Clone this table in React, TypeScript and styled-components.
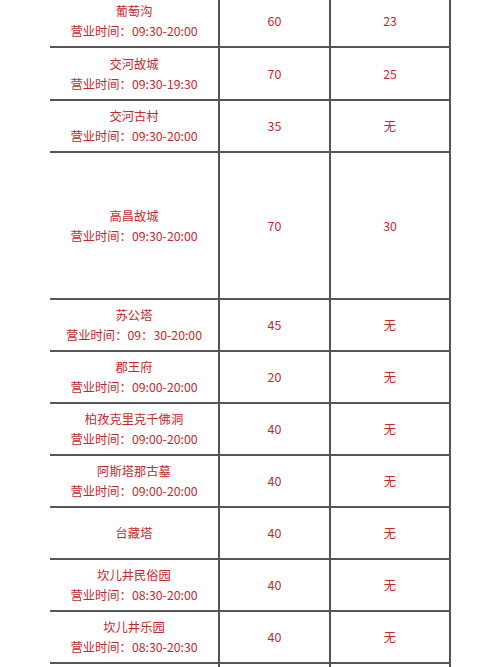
import React from "react";
import styled, { createGlobalStyle } from "styled-components";

const Global = createGlobalStyle`
  html, body { margin: 0; padding: 0; background: #ffffff; }
  body { font-family: "Microsoft YaHei", "Noto Sans CJK SC", "Noto Sans", sans-serif; overflow: hidden; }
`;

const Page = styled.div`
  width: 500px;
  height: 667px;
  overflow: hidden;
  background: #fff;
`;

const Table = styled.div`
  margin: -4px 0 0 50px;
  width: 401px;
  display: flex;
  flex-direction: column;
`;

const Row = styled.div<{ $h: number }>`
  display: grid;
  grid-template-columns: 170px 111px 120px;
  height: ${(p) => p.$h}px;
  border-bottom: 2px solid #555;
`;

const Cell = styled.div`
  display: flex;
  flex-direction: column;
  align-items: center;
  justify-content: center;
  border-right: 2px solid #555;
  color: #c8282d;
  font-size: 12.3px;
  line-height: 20px;
  text-align: center;
`;

const NumCell = styled(Cell)`
  font-size: 12.5px;
`;

const Line = styled.span`
  display: block;
  white-space: nowrap;
`;

type Item = { name: string; hours?: string; price: string; extra: string; h?: number };

const items: Item[] = [
  { name: "葡萄沟", hours: "营业时间：09:30-20:00", price: "60", extra: "23" },
  { name: "交河故城", hours: "营业时间：09:30-19:30", price: "70", extra: "25", h: 51 },
  { name: "交河古村", hours: "营业时间：09:30-20:00", price: "35", extra: "无" },
  { name: "高昌故城", hours: "营业时间：09:30-20:00", price: "70", extra: "30", h: 145 },
  { name: "苏公塔", hours: "营业时间：09：30-20:00", price: "45", extra: "无" },
  { name: "郡王府", hours: "营业时间：09:00-20:00", price: "20", extra: "无" },
  { name: "柏孜克里克千佛洞", hours: "营业时间：09:00-20:00", price: "40", extra: "无" },
  { name: "阿斯塔那古墓", hours: "营业时间：09:00-20:00", price: "40", extra: "无" },
  { name: "台藏塔", price: "40", extra: "无" },
  { name: "坎儿井民俗园", hours: "营业时间：08:30-20:00", price: "40", extra: "无" },
  { name: "坎儿井乐园", hours: "营业时间：08:30-20:30", price: "40", extra: "无" },
  { name: "", price: "", extra: "" },
];

export default function App() {
  return (
    <Page>
      <Global />
      <Table>
        {items.map((it, i) => (
          <Row key={i} $h={it.h ?? 50}>
            <Cell>
              <Line>{it.name}</Line>
              {it.hours && <Line>{it.hours}</Line>}
            </Cell>
            <NumCell>{it.price}</NumCell>
            <Cell>{it.extra}</Cell>
          </Row>
        ))}
      </Table>
    </Page>
  );
}
